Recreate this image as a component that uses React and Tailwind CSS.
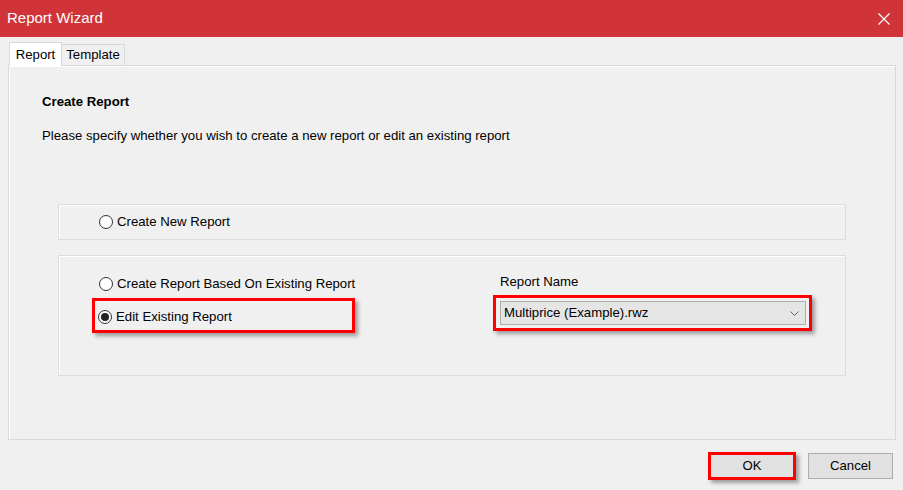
import React from "react";

function Radio({ checked }) {
  return (
    <span className="relative flex h-[14px] w-[14px] shrink-0 items-center justify-center rounded-full border border-[#333] bg-white">
      {checked && <span className="h-[8px] w-[8px] rounded-full bg-[#222]" />}
    </span>
  );
}

export default function App() {
  const font = { fontFamily: '"Liberation Sans", Arial, sans-serif' };
  return (
    <div
      className="flex h-[490px] w-[903px] flex-col overflow-hidden bg-[#f0f0f0] text-[13.2px] text-black"
      style={font}
    >
      {/* Title bar */}
      <div className="flex h-[37px] shrink-0 items-center justify-between bg-[#d13438] pl-[7px] pr-[13px]">
        <span className="text-[15px] text-white">Report Wizard</span>
        <svg width="12" height="12" viewBox="0 0 12 12" className="text-white">
          <path d="M0.5 0.5 L11.5 11.5 M11.5 0.5 L0.5 11.5" stroke="currentColor" strokeWidth="1.2" />
        </svg>
      </div>

      {/* Tabs */}
      <div className="mt-[4px] flex h-[24px] items-end pl-[9px]">
        <div className="relative z-10 -mb-px flex h-[24px] w-[53px] items-center justify-center border border-b-0 border-[#d9d9d9] bg-white">
          Report
        </div>
        <div className="flex h-[21px] w-[63px] items-center justify-center border border-l-0 border-[#d9d9d9] border-b-0 bg-[#f0f0f0]">
          Template
        </div>
      </div>

      {/* Panel */}
      <div className="ml-[8px] h-[375px] w-[888px] border border-[#d9d9d9] shadow-[inset_1px_1px_0_#ffffff]">
        <div className="pl-[33px] pt-[28px]">
          <div className="h-[16px] font-bold leading-[16px]">Create Report</div>
          <div className="mt-[18px] h-[16px] leading-[16px]">
            Please specify whether you wish to create a new report or edit an existing report
          </div>
        </div>

        {/* Group 1 */}
        <div className="ml-[49px] mt-[60px] flex h-[36px] w-[788px] items-center border border-[#dcdcdc] pl-[40px] shadow-[inset_1px_1px_0_#ffffff]">
          <Radio />
          <span className="ml-[4px] leading-[16px]">Create New Report</span>
        </div>

        {/* Group 2 */}
        <div className="ml-[49px] mt-[15px] flex h-[121px] w-[788px] border border-[#dcdcdc] shadow-[inset_1px_1px_0_#ffffff]">
          <div className="flex w-[434px] flex-col pl-[33px] pt-[20px]">
            <div className="flex h-[16px] items-center pl-[7px]">
              <Radio />
              <span className="ml-[4px] leading-[16px]">Create Report Based On Existing Report</span>
            </div>
            <div className="mt-[6px] flex h-[35px] w-[263px] items-center border-[3px] border-[#ff0000] pl-[3px] pt-[2px] shadow-[3px_3px_4px_rgba(0,0,0,0.35)]">
              <Radio checked />
              <span className="ml-[4px] leading-[16px]">Edit Existing Report</span>
            </div>
          </div>
          <div className="flex flex-col pt-[18px]">
            <div className="h-[16px] pl-[7px] leading-[16px]">Report Name</div>
            <div className="mt-[5px] flex h-[36px] w-[319px] items-center border-[3px] border-[#ff0000] pl-[4px] shadow-[3px_3px_4px_rgba(0,0,0,0.35)]">
              <div className="flex h-[24px] w-[306px] items-center justify-between border border-[#adadad] bg-[#e5e5e5] pl-[3px] pr-[6px]">
                <span className="leading-[16px]">Multiprice (Example).rwz</span>
                <svg width="9" height="5" viewBox="0 0 9 5">
                  <path d="M0.5 0.5 L4.5 4.5 L8.5 0.5" fill="none" stroke="#606060" strokeWidth="1" />
                </svg>
              </div>
            </div>
          </div>
        </div>
      </div>

      {/* Footer */}
      <div className="mt-[12px] flex items-center justify-end gap-[12px] pr-[10px]">
        <div className="flex h-[28px] w-[88px] items-center justify-center border-[3px] border-[#ff0000] bg-[#e1e1e1] shadow-[3px_3px_4px_rgba(0,0,0,0.35)]">
          OK
        </div>
        <div className="flex h-[26px] w-[85px] items-center justify-center border border-[#adadad] bg-[#e1e1e1]">
          Cancel
        </div>
      </div>
    </div>
  );
}
